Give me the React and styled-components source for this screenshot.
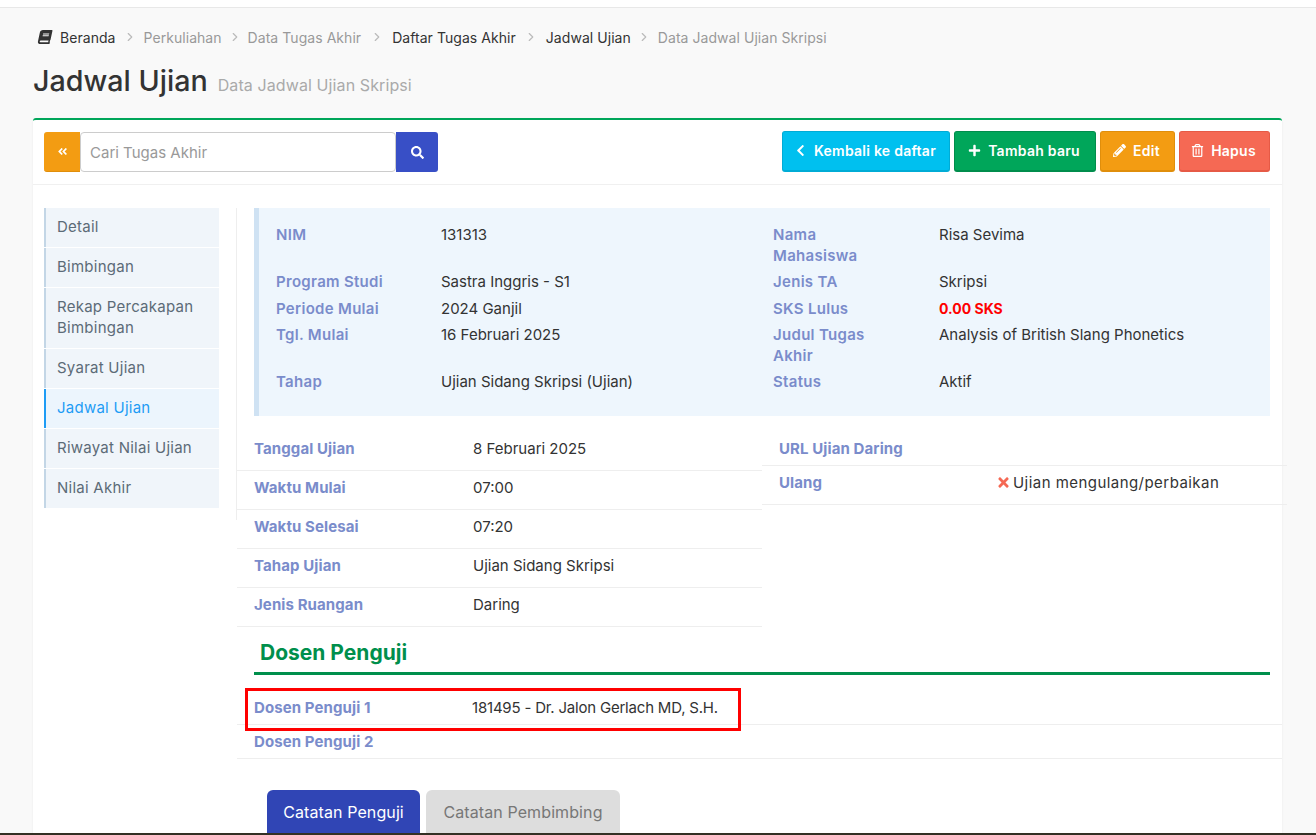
import React from 'react';
import styled, { createGlobalStyle } from 'styled-components';
import {
  FaBook,
  FaAngleDoubleLeft,
  FaSearch,
  FaChevronLeft,
  FaPlus,
  FaPencilAlt,
  FaRegTrashAlt,
  FaTimes,
} from 'react-icons/fa';
import { LuChevronRight } from 'react-icons/lu';

const GlobalStyle = createGlobalStyle`
html, body {
  margin: 0;
  height: 835px;
  overflow: hidden;
}
body {
  background-color: #f9f9f9;
  color: #333;
  font-family: Inter, "Open Sans", "Liberation Sans", sans-serif;
  font-size: 15px;
}
* {
  box-sizing: border-box;
}
`;

const TopBar = styled.div`
height: 8px;
background-color: #fff;
border-bottom: 1px solid #e8e8e8;
`;

const Page = styled.div`
padding: 0 34px 0 33px;
`;

const Breadcrumb = styled.div`
display: flex;
align-items: center;
height: 20px;
margin: 19px 0 0 5px;
font-size: 14px;
letter-spacing: 0.05px;
color: #999;
`;

const BookIcon = styled(FaBook)`
color: #333;
font-size: 14px;
margin-right: 8px;
transform: skewX(-12deg);
`;

const Crumb = styled.span`
color: ${props => (props.$dark ? '#333' : '#999')};
`;

const CrumbSep = styled(LuChevronRight)`
color: #bbb;
font-size: 14px;
margin: 0 ${props => props.$wide || 6}px;
`;

const TitleRow = styled.div`
display: flex;
align-items: baseline;
margin-top: 16px;
height: 42px;
`;

const Title = styled.h1`
margin: 0;
font-size: 28.7px;
font-weight: 500;
color: #333;
`;

const SubTitle = styled.small`
margin-left: 10px;
font-size: 16px;
letter-spacing: 0.1px;
color: #aaa;
`;

const Card = styled.div`
margin-top: 13px;
background-color: #fff;
border-top: 2px solid #00a65a;
border-radius: 3px 3px 0 0;
box-shadow: 0 1px 2px rgba(0, 0, 0, 0.08);
height: 720px;
`;

const Toolbar = styled.div`
display: flex;
justify-content: space-between;
padding: 11px 12px 11px 11px;
height: 65px;
border-bottom: 1px solid #f0f0f0;
`;

const SearchGroup = styled.div`
display: flex;
height: 40px;
width: 394px;
margin-top: 1px;
`;

const SearchToggle = styled.button`
width: 36px;
border: none;
border-bottom: 1px solid #e08e0b;
border-radius: 3px 0 0 3px;
background-color: #f39c12;
color: #fff;
font-size: 11px;
display: flex;
align-items: center;
justify-content: center;
padding: 0;
`;

const SearchInput = styled.div`
flex: 1;
display: flex;
align-items: center;
padding-left: 9px;
background-color: #fff;
border: 1px solid #ccc;
border-radius: 4px;
color: #999;
font-size: 15px;
`;

const SearchButton = styled.button`
width: 42px;
border: none;
border-radius: 0 3px 3px 0;
background-color: #384fc6;
color: #fff;
font-size: 13px;
display: flex;
align-items: center;
justify-content: center;
padding: 0;
`;

const Actions = styled.div`
display: flex;
gap: 4px;
`;

const ActionButton = styled.button`
display: flex;
align-items: center;
gap: 7px;
height: 41px;
width: ${props => props.$width}px;
justify-content: center;
border: 1px solid ${props => props.$edge};
border-bottom-width: 2px;
border-radius: 3px;
background-color: ${props => props.$color};
color: #fff;
font-family: inherit;
font-size: 14px;
font-weight: 600;
letter-spacing: 0.25px;
padding: 0 2px 2px 0;
svg {
  font-size: 13px;
}
`;

const Body = styled.div`
display: flex;
padding: 23px 0 0 11px;
`;

const Sidebar = styled.div`
width: 193px;
height: 312px;
padding-right: 17px;
border-right: 1px solid #eee;
flex-shrink: 0;
display: flex;
flex-direction: column;
gap: 1px;
`;

const NavItem = styled.div`
padding: 8px 10px 10px 11px;
line-height: 21px;
font-size: 15px;
letter-spacing: 0.25px;
background-color: ${props => (props.$active ? '#ecf5fd' : '#f0f5fa')};
color: ${props => (props.$active ? '#1e9cf5' : '#5c6b77')};
border-left: 2px solid ${props => (props.$active ? '#1e9cf5' : '#c3d6e6')};
`;

const Main = styled.div`
flex: 1;
min-width: 0;
`;

const InfoPanel = styled.div`
margin: 0 12px 0 17px;
height: 208px;
padding: 16px 17px;
background-color: #eef6fd;
border-left: 5px solid #cfe2f3;
display: grid;
grid-template-columns: 165px 332px 166px 1fr;
row-gap: 5.3px;
align-content: start;
line-height: 21px;
`;

const Label = styled.div`
font-weight: 600;
letter-spacing: 0.3px;
color: #7a8ccb;
max-width: 112px;
`;

const Value = styled.div`
color: ${props => (props.$danger ? '#f00' : '#333')};
font-weight: ${props => (props.$danger ? 700 : 400)};
font-size: ${props => (props.$danger ? 14 : 15)}px;
`;

const Columns = styled.div`
display: flex;
margin-top: 16px;
`;

const Column = styled.div`
width: 525px;
flex-shrink: 0;
`;

const DataRow = styled.div`
display: grid;
grid-template-columns: ${props => props.$labelWidth || 219}px 1fr;
align-items: center;
height: ${props => (props.$compact ? 34 : 39)}px;
padding: 0 0 ${props => (props.$compact ? 0 : 5)}px 17px;
border-bottom: 1px solid #eee;
line-height: 21px;
`;

const DataLabel = styled.div`
font-weight: 700;
letter-spacing: 0.1px;
color: #7a8ccb;
`;

const DataValue = styled.div`
display: flex;
align-items: center;
gap: 2px;
letter-spacing: ${props => props.$spacing || 0}px;
color: #333;
`;

const CrossIcon = styled(FaTimes)`
color: #f56954;
font-size: 15px;
margin-left: -2px;
`;

const SectionTitle = styled.h3`
margin: 12px 12px 0 17px;
padding: 0 0 0 6px;
height: 36px;
font-size: 21px;
font-weight: 700;
line-height: 27px;
color: #008f4c;
border-bottom: 3px solid #008f4c;
`;

const ExaminerList = styled.div`
position: relative;
margin-top: 16px;
`;

const Highlight = styled.div`
position: absolute;
left: 8px;
top: -3px;
width: 496px;
height: 43px;
border: 3px solid #f00;
pointer-events: none;
`;

const TabBar = styled.div`
display: flex;
gap: 6px;
margin: 31px 0 0 30px;
`;

const Tab = styled.div`
width: ${props => props.$width}px;
height: 60px;
padding: 12px 0;
line-height: 21px;
font-size: 16px;
letter-spacing: 0.1px;
text-align: center;
border-radius: 6px 6px 0 0;
background-color: ${props => (props.$active ? '#3045b5' : '#ddd')};
color: ${props => (props.$active ? '#fff' : '#777')};
`;

const BottomEdge = styled.div`
position: fixed;
left: 0;
right: 0;
bottom: 0;
height: 2px;
background-color: #333024;
`;

function App() {
  const navItems = ['Detail', 'Bimbingan', 'Rekap Percakapan Bimbingan', 'Syarat Ujian', 'Jadwal Ujian', 'Riwayat Nilai Ujian', 'Nilai Akhir'];
  const info = [
    ['NIM', '131313', 'Nama Mahasiswa', 'Risa Sevima'],
    ['Program Studi', 'Sastra Inggris - S1', 'Jenis TA', 'Skripsi'],
    ['Periode Mulai', '2024 Ganjil', 'SKS Lulus', '0.00 SKS'],
    ['Tgl. Mulai', '16 Februari 2025', 'Judul Tugas Akhir', 'Analysis of British Slang Phonetics'],
    ['Tahap', 'Ujian Sidang Skripsi (Ujian)', 'Status', 'Aktif'],
  ];
  const schedule = [
    ['Tanggal Ujian', '8 Februari 2025'],
    ['Waktu Mulai', '07:00'],
    ['Waktu Selesai', '07:20'],
    ['Tahap Ujian', 'Ujian Sidang Skripsi'],
    ['Jenis Ruangan', 'Daring'],
  ];

  return (
    <>
      <GlobalStyle />
      <TopBar />
      <Page>
        <Breadcrumb>
          <BookIcon />
          <Crumb $dark>Beranda</Crumb>
          <CrumbSep $wide={7} />
          <Crumb>Perkuliahan</Crumb>
          <CrumbSep />
          <Crumb>Data Tugas Akhir</Crumb>
          <CrumbSep $wide={8.5} />
          <Crumb $dark>Daftar Tugas Akhir</Crumb>
          <CrumbSep $wide={8} />
          <Crumb $dark>Jadwal Ujian</Crumb>
          <CrumbSep $wide={6.5} />
          <Crumb>Data Jadwal Ujian Skripsi</Crumb>
        </Breadcrumb>
        <TitleRow>
          <Title>Jadwal Ujian</Title>
          <SubTitle>Data Jadwal Ujian Skripsi</SubTitle>
        </TitleRow>
        <Card>
          <Toolbar>
            <SearchGroup>
              <SearchToggle><FaAngleDoubleLeft /></SearchToggle>
              <SearchInput>Cari Tugas Akhir</SearchInput>
              <SearchButton><FaSearch /></SearchButton>
            </SearchGroup>
            <Actions>
              <ActionButton $width={168} $color="#00c0ef" $edge="#00acd6"><FaChevronLeft />Kembali ke daftar</ActionButton>
              <ActionButton $width={142} $color="#00a65a" $edge="#008d4c"><FaPlus />Tambah baru</ActionButton>
              <ActionButton $width={75} $color="#f39c12" $edge="#e08e0b"><FaPencilAlt />Edit</ActionButton>
              <ActionButton $width={91} $color="#f56954" $edge="#e65a46"><FaRegTrashAlt />Hapus</ActionButton>
            </Actions>
          </Toolbar>
          <Body>
            <Sidebar>
              {navItems.map(item => (
                <NavItem key={item} $active={item === 'Jadwal Ujian'}>{item}</NavItem>
              ))}
            </Sidebar>
            <Main>
              <InfoPanel>
                {info.map(row => (
                  <React.Fragment key={row[0]}>
                    <Label>{row[0]}</Label>
                    <Value>{row[1]}</Value>
                    <Label>{row[2]}</Label>
                    <Value $danger={row[2] === 'SKS Lulus'}>{row[3]}</Value>
                  </React.Fragment>
                ))}
              </InfoPanel>
              <Columns>
                <Column>
                  {schedule.map(row => (
                    <DataRow key={row[0]}>
                      <DataLabel>{row[0]}</DataLabel>
                      <DataValue>{row[1]}</DataValue>
                    </DataRow>
                  ))}
                </Column>
                <Column>
                  <DataRow $compact>
                    <DataLabel>URL Ujian Daring</DataLabel>
                    <DataValue />
                  </DataRow>
                  <DataRow>
                    <DataLabel>Ulang</DataLabel>
                    <DataValue $spacing={0.45}><CrossIcon />Ujian mengulang/perbaikan</DataValue>
                  </DataRow>
                </Column>
              </Columns>
              <SectionTitle>Dosen Penguji</SectionTitle>
              <ExaminerList>
                <DataRow $compact $labelWidth={218}>
                  <DataLabel>Dosen Penguji 1</DataLabel>
                  <DataValue $spacing={-0.2}>181495 - Dr. Jalon Gerlach MD, S.H.</DataValue>
                </DataRow>
                <DataRow $compact $labelWidth={218}>
                  <DataLabel>Dosen Penguji 2</DataLabel>
                  <DataValue />
                </DataRow>
                <Highlight />
              </ExaminerList>
              <TabBar>
                <Tab $active $width={153}>Catatan Penguji</Tab>
                <Tab $width={194}>Catatan Pembimbing</Tab>
              </TabBar>
            </Main>
          </Body>
        </Card>
      </Page>
      <BottomEdge />
    </>
  );
}

export default App;
